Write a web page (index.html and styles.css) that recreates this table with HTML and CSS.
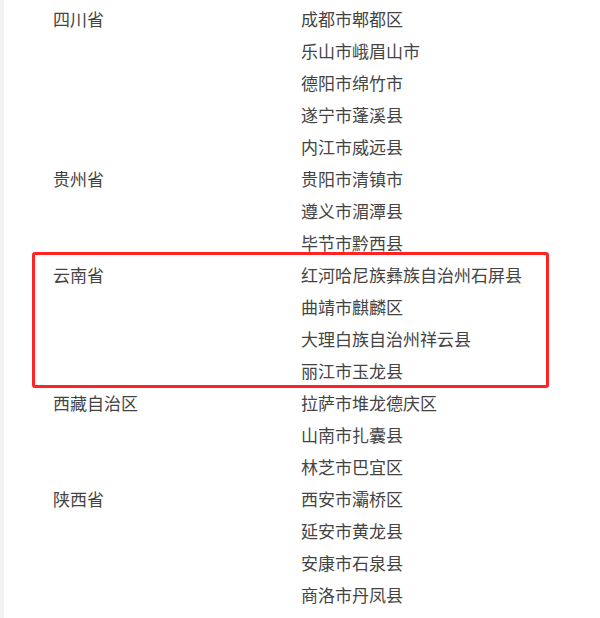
FILE: index.html
```html
<!DOCTYPE html>
<html lang="zh-CN">
<head>
    <meta charset="UTF-8">
    <meta name="viewport" content="width=device-width, initial-scale=1.0">
    <title>试点地区</title>
    <link rel="stylesheet" href="styles.css">
</head>
<body>
    <div class="page">
        <table class="region-table">
            <tr><td class="province" rowspan="5">四川省</td><td>成都市郫都区</td></tr>
            <tr><td>乐山市峨眉山市</td></tr>
            <tr><td>德阳市绵竹市</td></tr>
            <tr><td>遂宁市蓬溪县</td></tr>
            <tr><td>内江市威远县</td></tr>
            <tr><td class="province" rowspan="3">贵州省</td><td>贵阳市清镇市</td></tr>
            <tr><td>遵义市湄潭县</td></tr>
            <tr><td>毕节市黔西县</td></tr>
            <tr><td class="province" rowspan="4">云南省</td><td>红河哈尼族彝族自治州石屏县</td></tr>
            <tr><td>曲靖市麒麟区</td></tr>
            <tr><td>大理白族自治州祥云县</td></tr>
            <tr><td>丽江市玉龙县</td></tr>
            <tr><td class="province" rowspan="3">西藏自治区</td><td>拉萨市堆龙德庆区</td></tr>
            <tr><td>山南市扎囊县</td></tr>
            <tr><td>林芝市巴宜区</td></tr>
            <tr><td class="province" rowspan="4">陕西省</td><td>西安市灞桥区</td></tr>
            <tr><td>延安市黄龙县</td></tr>
            <tr><td>安康市石泉县</td></tr>
            <tr><td>商洛市丹凤县</td></tr>
        </table>
        <div class="highlight"></div>
    </div>
</body>
</html>
```

FILE: styles.css
```css
body {
    margin: 0;
    background-color: #fff;
    font-family: "Microsoft YaHei", "Noto Sans CJK SC", sans-serif;
    color: #444;
}
.page {
    position: relative;
    border-left: 4px solid #f3f3f3;
    padding-top: 3px;
    min-height: 615px;
}
.region-table {
    margin-left: 49px;
    border-collapse: collapse;
}
.region-table td {
    padding: 0;
    height: 32px;
    font-size: 17px;
    line-height: 32px;
    vertical-align: top;
    white-space: nowrap;
}
.region-table .province {
    width: 248px;
}
.highlight {
    position: absolute;
    left: 28px;
    top: 252px;
    width: 511px;
    height: 130px;
    border: 3px solid #ff2424;
    border-radius: 3px;
}
```
